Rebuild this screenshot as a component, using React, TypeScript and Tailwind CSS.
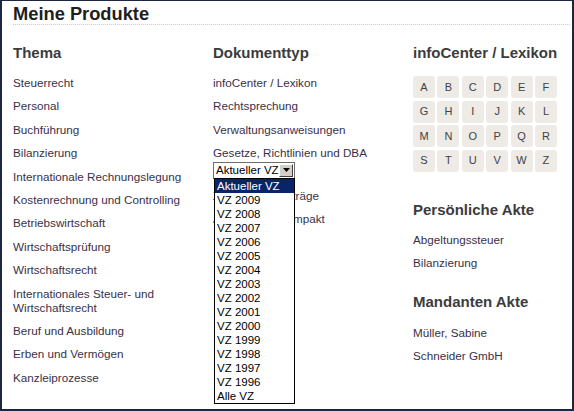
import React from "react";

const thema = [
  "Steuerrecht",
  "Personal",
  "Buchführung",
  "Bilanzierung",
  "Internationale Rechnungslegung",
  "Kostenrechnung und Controlling",
  "Betriebswirtschaft",
  "Wirtschaftsprüfung",
  "Wirtschaftsrecht",
  "Internationales Steuer- und Wirtschaftsrecht",
  "Beruf und Ausbildung",
  "Erben und Vermögen",
  "Kanzleiprozesse",
];

const letters = "ABCDEFGHIJKLMNOPQRSTUVWZ".split("");

const vz = [
  "Aktueller VZ",
  "VZ 2009",
  "VZ 2008",
  "VZ 2007",
  "VZ 2006",
  "VZ 2005",
  "VZ 2004",
  "VZ 2003",
  "VZ 2002",
  "VZ 2001",
  "VZ 2000",
  "VZ 1999",
  "VZ 1998",
  "VZ 1997",
  "VZ 1996",
  "Alle VZ",
];

function Item({ children }: { children: React.ReactNode }) {
  return (
    <li className="text-[11.7px] leading-[14px] text-[#3a3148]">{children}</li>
  );
}

function Heading({ children }: { children: React.ReactNode }) {
  return (
    <h2 className="text-[15px] leading-[18px] font-bold text-[#3c3c3c] whitespace-nowrap">
      {children}
    </h2>
  );
}

export default function App() {
  return (
    <div className="w-[574px] h-[411px] border-2 border-t-[1px] border-[#1c2640] bg-white overflow-hidden font-['Liberation_Sans',Arial,sans-serif]">
      <div className="pl-[11px] pr-[2px]">
        <h1 className="pt-[3px] text-[18.3px] leading-[20px] font-bold text-[#1e1e1e] border-b border-dotted border-[#c8c8c8]">
          Meine Produkte
        </h1>
        <div className="mt-[19px] grid grid-cols-[200px_200px_1fr]">
          {/* Thema */}
          <div>
            <Heading>Thema</Heading>
            <ul className="mt-[14px] flex flex-col gap-[9.4px] pr-[14px]">
              {thema.map((t) => (
                <Item key={t}>{t}</Item>
              ))}
            </ul>
          </div>
          {/* Dokumenttyp */}
          <div>
            <Heading>Dokumenttyp</Heading>
            <ul className="mt-[14px] flex flex-col gap-[9.4px]">
              <Item>infoCenter / Lexikon</Item>
              <Item>Rechtsprechung</Item>
              <Item>Verwaltungsanweisungen</Item>
              <li className="text-[11.7px] leading-[14px] text-[#3a3148]">
                Gesetze, Richtlinien und DBA
                <div className="relative mt-[1.5px] mb-[1px]">
                  <div className="w-[82px] h-[17px] border border-[#6d6d6d] bg-white flex items-center pl-[2px] text-[11.5px] text-black overflow-hidden">
                    <span className="flex-1 leading-[14px] whitespace-nowrap overflow-hidden">
                      Aktueller VZ
                    </span>
                    <span className="shrink-0 w-[14px] h-[13px] mr-[1px] bg-[#d4d0c8] border border-t-white border-l-white border-r-[#404040] border-b-[#404040] flex items-center justify-center">
                      <svg width="7" height="4" viewBox="0 0 7 4">
                        <path d="M0 0 H7 L3.5 4 Z" fill="#000" />
                      </svg>
                    </span>
                  </div>
                  <div className="absolute left-[1px] top-[16px] w-[81px] z-10 bg-white border border-black">
                    {vz.map((v, i) => (
                      <div
                        key={v}
                        className={
                          i === 0
                            ? "h-[14px] leading-[14px] pl-[2px] text-[11.5px] whitespace-nowrap bg-[#0a246a] text-white"
                            : "h-[14px] leading-[14px] pl-[2px] text-[11.5px] whitespace-nowrap text-black"
                        }
                      >
                        {v}
                      </div>
                    ))}
                  </div>
                </div>
              </li>
              <Item>Zeitschriftenbeiträge</Item>
              <Item>Arbeitshilfen kompakt</Item>
            </ul>
          </div>
          {/* infoCenter */}
          <div>
            <Heading>infoCenter / Lexikon</Heading>
            <div className="mt-[14px] grid grid-cols-[repeat(6,22px)] gap-x-[2.4px] gap-y-[2.5px]">
              {letters.map((l) => (
                <div
                  key={l}
                  className="h-[22px] rounded-[3px] bg-[#eeebe6] flex items-center justify-center text-[11px] text-[#404048]"
                >
                  {l}
                </div>
              ))}
            </div>
            <div className="mt-[29px]">
              <Heading>Persönliche Akte</Heading>
            </div>
            <ul className="mt-[14.5px] flex flex-col gap-[9.4px]">
              <Item>Abgeltungssteuer</Item>
              <Item>Bilanzierung</Item>
            </ul>
            <div className="mt-[23px]">
              <Heading>Mandanten Akte</Heading>
            </div>
            <ul className="mt-[14.5px] flex flex-col gap-[9.4px]">
              <Item>Müller, Sabine</Item>
              <Item>Schneider GmbH</Item>
            </ul>
          </div>
        </div>
      </div>
    </div>
  );
}
